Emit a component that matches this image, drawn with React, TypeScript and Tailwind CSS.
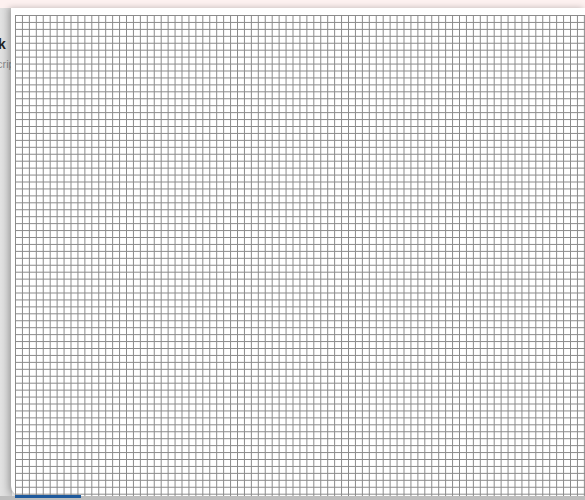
import React from "react";

export default function App() {
  return (
    <div
      className="relative w-[585px] h-[500px] overflow-hidden bg-[#f3f3f3]"
      style={{ fontFamily: '"Liberation Sans", Arial, sans-serif' }}
    >
      <div className="absolute left-0 top-0 w-full h-[8px] bg-[#fdf1f0]" />
      <div className="absolute left-0 top-[8px] w-[12px] h-full bg-gradient-to-r from-[#e2e2e2] to-[#d0d0d0]" />
      <div className="absolute left-[-2px] top-[34px] text-[14px] font-bold text-[#222]">k</div>
      <div className="absolute left-[-3px] top-[56px] text-[11px] text-[#888]">crip</div>
      <div className="absolute left-[11px] top-[8px] right-0 bottom-[4px] bg-white rounded-bl-[10px] shadow-[-2px_0_6px_rgba(0,0,0,0.25)] pl-[4px] pt-[7px]">
        <div className="w-full h-[484px] bg-[image:linear-gradient(to_right,#8a8a8a_1px,transparent_1px),linear-gradient(to_bottom,#8a8a8a_1px,transparent_1px)] bg-[size:6.95px_6.95px]" />
      </div>
      <div className="absolute left-0 bottom-0 w-full h-[4px] bg-[#bdbdbd]" />
      <div className="absolute left-[15px] bottom-[2px] w-[66px] h-[3px] bg-[#1f5a9c]" />
    </div>
  );
}
